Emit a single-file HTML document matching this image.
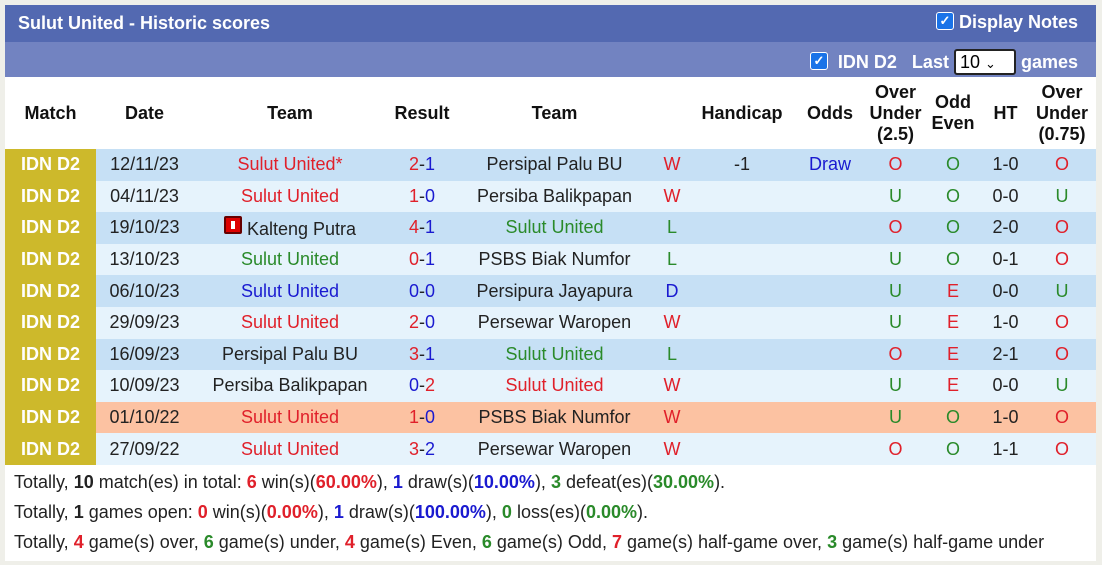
<!DOCTYPE html>
<html><head><style>
body{margin:0;width:1102px;height:565px;background:#efefe9;font-family:"Liberation Sans",Arial,sans-serif;overflow:hidden}
.wrap{position:absolute;left:5px;top:5px;width:1091px;background:#fff}
.h1{height:37px;background:#5369b1;color:#fff;font-weight:bold;font-size:18px;position:relative}
.h2{height:35px;background:#7283c1;color:#fff;font-weight:bold;font-size:18px;position:relative}
.cb{display:inline-block;width:16px;height:16px;background:#1a73e8;border:1px solid #fff;border-radius:3px;color:#fff;font-size:13px;line-height:16px;text-align:center;vertical-align:3px}
table{border-collapse:collapse;width:1091px;table-layout:fixed;font-size:18px}
th{height:70px;font-weight:bold;color:#111;font-size:18px;line-height:21px}
td{text-align:center;height:31.6px;padding:0;color:#222;white-space:nowrap}
td.m{background:#cdb92b;color:#fff;font-weight:bold}
tr.a td{background:#c6e0f5}tr.b td{background:#e6f3fc}tr.c td{background:#fcc2a2}
tr td.m{background:#cdb92b}
.r{color:#e0202a}.g{color:#2a8a2a}.bl{color:#1a1ad0}
.sum{font-size:18px;color:#222;padding-left:9px}
.sum div{height:30px;line-height:30px}
</style></head><body>
<div class="wrap">
<div class="h1"><span style="position:absolute;left:13px;top:8px">Sulut United - Historic scores</span><span style="position:absolute;right:18px;top:7px"><span class="cb">✓</span> Display Notes</span></div>
<div class="h2"><span style="position:absolute;right:18px;top:7px"><span class="cb">✓</span>&nbsp; IDN D2 &nbsp;&nbsp;Last <span style="display:inline-block;background:#fff;color:#000;font-weight:normal;border:2px solid #222;border-radius:3px;width:54px;height:22px;line-height:22px;padding-left:4px;box-sizing:content-box;text-align:left">10 <span style="font-size:13px">⌄</span></span> games</span></div>
<table>
<colgroup><col style="width:91px"><col style="width:97px"><col style="width:194px"><col style="width:70px"><col style="width:195px"><col style="width:40px"><col style="width:100px"><col style="width:76px"><col style="width:55px"><col style="width:60px"><col style="width:45px"><col style="width:68px"></colgroup>
<tr><th>Match</th><th>Date</th><th>Team</th><th>Result</th><th>Team</th><th></th><th>Handicap</th><th>Odds</th><th>Over<br>Under<br>(2.5)</th><th>Odd<br>Even</th><th>HT</th><th>Over<br>Under<br>(0.75)</th></tr>
<tr class="a"><td class="m">IDN D2</td><td>12/11/23</td><td class="r">Sulut United*</td><td><span class="r">2</span>-<span class="bl">1</span></td><td>Persipal Palu BU</td><td class="r">W</td><td>-1</td><td class="bl">Draw</td><td class="r">O</td><td class="g">O</td><td>1-0</td><td class="r">O</td></tr>
<tr class="b"><td class="m">IDN D2</td><td>04/11/23</td><td class="r">Sulut United</td><td><span class="r">1</span>-<span class="bl">0</span></td><td>Persiba Balikpapan</td><td class="r">W</td><td></td><td></td><td class="g">U</td><td class="g">O</td><td>0-0</td><td class="g">U</td></tr>
<tr class="a"><td class="m">IDN D2</td><td>19/10/23</td><td><span style="display:inline-block;width:14px;height:14px;background:#d00;border:2px solid #600;border-radius:2px;vertical-align:1px;position:relative"><span style="position:absolute;left:5px;top:3px;width:4px;height:8px;background:#fff"></span></span> Kalteng Putra</td><td><span class="r">4</span>-<span class="bl">1</span></td><td class="g">Sulut United</td><td class="g">L</td><td></td><td></td><td class="r">O</td><td class="g">O</td><td>2-0</td><td class="r">O</td></tr>
<tr class="b"><td class="m">IDN D2</td><td>13/10/23</td><td class="g">Sulut United</td><td><span class="r">0</span>-<span class="bl">1</span></td><td>PSBS Biak Numfor</td><td class="g">L</td><td></td><td></td><td class="g">U</td><td class="g">O</td><td>0-1</td><td class="r">O</td></tr>
<tr class="a"><td class="m">IDN D2</td><td>06/10/23</td><td class="bl">Sulut United</td><td><span class="bl">0</span>-<span class="bl">0</span></td><td>Persipura Jayapura</td><td class="bl">D</td><td></td><td></td><td class="g">U</td><td class="r">E</td><td>0-0</td><td class="g">U</td></tr>
<tr class="b"><td class="m">IDN D2</td><td>29/09/23</td><td class="r">Sulut United</td><td><span class="r">2</span>-<span class="bl">0</span></td><td>Persewar Waropen</td><td class="r">W</td><td></td><td></td><td class="g">U</td><td class="r">E</td><td>1-0</td><td class="r">O</td></tr>
<tr class="a"><td class="m">IDN D2</td><td>16/09/23</td><td>Persipal Palu BU</td><td><span class="r">3</span>-<span class="bl">1</span></td><td class="g">Sulut United</td><td class="g">L</td><td></td><td></td><td class="r">O</td><td class="r">E</td><td>2-1</td><td class="r">O</td></tr>
<tr class="b"><td class="m">IDN D2</td><td>10/09/23</td><td>Persiba Balikpapan</td><td><span class="bl">0</span>-<span class="r">2</span></td><td class="r">Sulut United</td><td class="r">W</td><td></td><td></td><td class="g">U</td><td class="r">E</td><td>0-0</td><td class="g">U</td></tr>
<tr class="c"><td class="m">IDN D2</td><td>01/10/22</td><td class="r">Sulut United</td><td><span class="r">1</span>-<span class="bl">0</span></td><td>PSBS Biak Numfor</td><td class="r">W</td><td></td><td></td><td class="g">U</td><td class="g">O</td><td>1-0</td><td class="r">O</td></tr>
<tr class="b"><td class="m">IDN D2</td><td>27/09/22</td><td class="r">Sulut United</td><td><span class="r">3</span>-<span class="bl">2</span></td><td>Persewar Waropen</td><td class="r">W</td><td></td><td></td><td class="r">O</td><td class="g">O</td><td>1-1</td><td class="r">O</td></tr>
</table>
<div class="sum" style="padding-top:2px;padding-bottom:4px">
<div>Totally, <b>10</b> match(es) in total: <b class="r">6</b> win(s)(<b class="r">60.00%</b>), <b class="bl">1</b> draw(s)(<b class="bl">10.00%</b>), <b class="g">3</b> defeat(es)(<b class="g">30.00%</b>).</div>
<div>Totally, <b>1</b> games open: <b class="r">0</b> win(s)(<b class="r">0.00%</b>), <b class="bl">1</b> draw(s)(<b class="bl">100.00%</b>), <b class="g">0</b> loss(es)(<b class="g">0.00%</b>).</div>
<div>Totally, <b class="r">4</b> game(s) over, <b class="g">6</b> game(s) under, <b class="r">4</b> game(s) Even, <b class="g">6</b> game(s) Odd, <b class="r">7</b> game(s) half-game over, <b class="g">3</b> game(s) half-game under</div>
</div>
</div>
</body></html>
